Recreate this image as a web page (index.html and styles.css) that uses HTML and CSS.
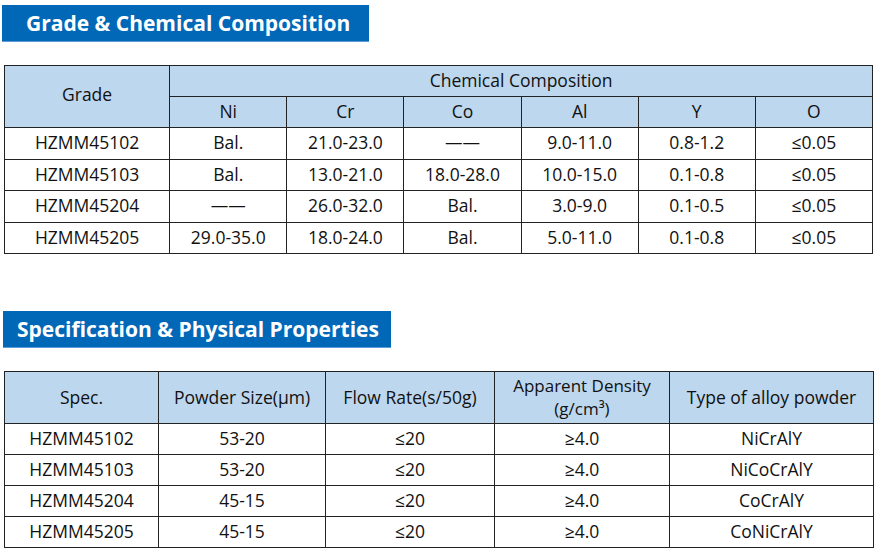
FILE: index.html
```html
<!DOCTYPE html>
<html>
<head>
<meta charset="utf-8">
<link rel="stylesheet" href="styles.css">
</head>
<body>
<div class="page">
  <h2 class="banner banner-1">Grade &amp; Chemical Composition</h2>
  <table class="grid grid-1">
    <colgroup>
      <col class="c-grade"><col class="c-el"><col class="c-el"><col class="c-el"><col class="c-el"><col class="c-el"><col class="c-el">
    </colgroup>
    <thead>
      <tr class="h1"><th rowspan="2" class="grade-head">Grade</th><th colspan="6">Chemical Composition</th></tr>
      <tr class="h2"><th>Ni</th><th>Cr</th><th>Co</th><th>Al</th><th>Y</th><th>O</th></tr>
    </thead>
    <tbody>
      <tr><td>HZMM45102</td><td>Bal.</td><td>21.0-23.0</td><td>——</td><td>9.0-11.0</td><td>0.8-1.2</td><td>≤0.05</td></tr>
      <tr><td>HZMM45103</td><td>Bal.</td><td>13.0-21.0</td><td>18.0-28.0</td><td>10.0-15.0</td><td>0.1-0.8</td><td>≤0.05</td></tr>
      <tr><td>HZMM45204</td><td>——</td><td>26.0-32.0</td><td>Bal.</td><td>3.0-9.0</td><td>0.1-0.5</td><td>≤0.05</td></tr>
      <tr><td>HZMM45205</td><td>29.0-35.0</td><td>18.0-24.0</td><td>Bal.</td><td>5.0-11.0</td><td>0.1-0.8</td><td>≤0.05</td></tr>
    </tbody>
  </table>

  <h2 class="banner banner-2">Specification &amp; Physical Properties</h2>
  <table class="grid grid-2">
    <colgroup>
      <col class="c-spec"><col class="c-size"><col class="c-flow"><col class="c-dens"><col class="c-type">
    </colgroup>
    <thead>
      <tr class="h3"><th>Spec.</th><th>Powder Size(μm)</th><th>Flow Rate(s/50g)</th><th class="dens-head"><span class="two-line">Apparent Density</span><span class="two-line">(g/cm³)</span></th><th>Type of alloy powder</th></tr>
    </thead>
    <tbody>
      <tr><td>HZMM45102</td><td>53-20</td><td>≤20</td><td>≥4.0</td><td>NiCrAlY</td></tr>
      <tr><td>HZMM45103</td><td>53-20</td><td>≤20</td><td>≥4.0</td><td>NiCoCrAlY</td></tr>
      <tr><td>HZMM45204</td><td>45-15</td><td>≤20</td><td>≥4.0</td><td>CoCrAlY</td></tr>
      <tr><td>HZMM45205</td><td>45-15</td><td>≤20</td><td>≥4.0</td><td>CoNiCrAlY</td></tr>
    </tbody>
  </table>
</div>
</body>
</html>
```

FILE: styles.css
```css
html, body {
  margin: 0;
  padding: 0;
  background: #ffffff;
}

.page {
  display: flex;
  flex-direction: column;
  align-items: flex-start;
  padding: 5px 0 0 0;
  font-family: "Open Sans", "Noto Sans", sans-serif;
  color: #111111;
}

.banner {
  margin: 0;
  background: #0168b8;
  color: #ffffff;
  font-family: "Open Sans", sans-serif;
  font-weight: 700;
  font-size: 21px;
  line-height: 36px;
  height: 37px;
  box-sizing: border-box;
  border-bottom: 1px solid #5a9bd8;
  white-space: nowrap;
}

.banner-1 {
  margin-left: 2px;
  width: 367px;
  padding-left: 24px;
}

.banner-2 {
  margin-top: 57px;
  margin-left: 3px;
  width: 388px;
  padding-left: 14px;
}

.grid {
  border-collapse: collapse;
  table-layout: fixed;
  width: 869px;
  margin-left: 4px;
  font-size: 17.5px;
  line-height: 22px;
}

.grid-1 {
  margin-top: 23px;
}

.grid-2 {
  margin-top: 23px;
}

.grid th,
.grid td {
  border: 1px solid #222222;
  text-align: center;
  padding: 0 0 2px 0;
  font-weight: 400;
  white-space: nowrap;
}

.grid th {
  background: #bdd7ee;
}

.grid-1 .grade-head {
  padding-bottom: 5px;
}

.grid-1 tr { height: 31px; }
.grid-1 tbody tr { height: 31.5px; }

.c-grade { width: 165px; }
.c-el { width: 117px; }

.c-spec { width: 154px; }
.c-size { width: 167px; }
.c-flow { width: 169px; }
.c-dens { width: 175px; }
.c-type { width: 204px; }

.h3 { height: 52px; }
.grid-2 .dens-head {
  font-size: 17px;
  padding-bottom: 1px;
}
.two-line { display: block; line-height: 23.5px; }
.grid-2 tbody tr { height: 31px; }
```
